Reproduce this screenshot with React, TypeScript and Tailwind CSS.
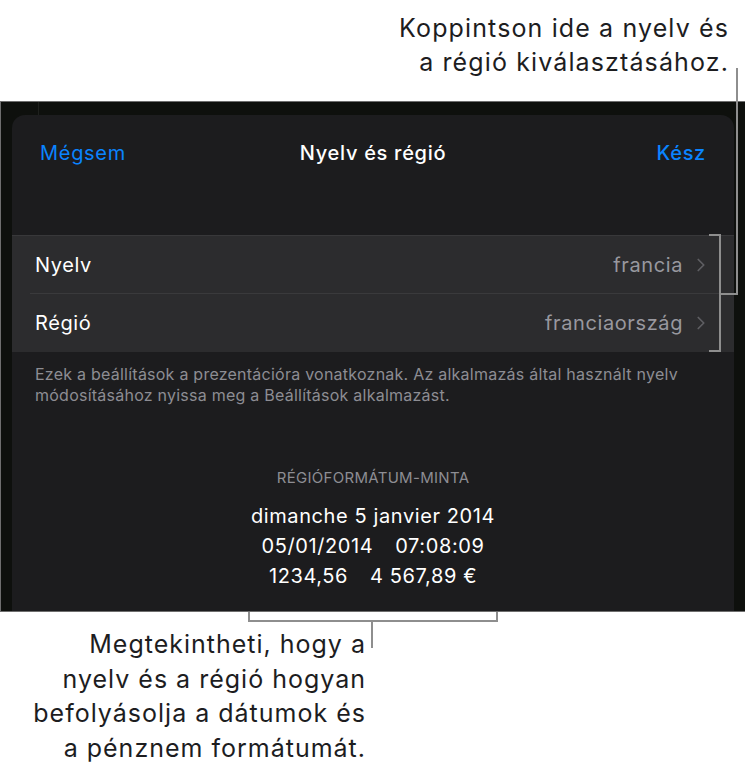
import { ChevronRight } from 'lucide-react';

const Row = ({ label, value, last }: { label: string; value: string; last?: boolean }) => (
  <div className="flex h-[58px] items-stretch bg-[#2c2c2e]">
    <div
      className={`ml-[18px] flex flex-1 items-center justify-between pl-[5px] pr-[22px] ${
        last ? '' : 'border-b border-[#3a3a3c]'
      }`}
    >
      <span className="text-[20px] tracking-[0.03em] text-white">{label}</span>
      <span className="flex items-center gap-[7px] text-[20px] tracking-[0.03em] text-[#98989f]">
        {value}
        <ChevronRight size={22} strokeWidth={1.9} className="text-[#5e5e62]" />
      </span>
    </div>
  </div>
);

export default function App() {
  return (
    <div className="relative h-[771px] w-[745px] overflow-hidden bg-white font-['Inter',sans-serif]">
      {/* top callout */}
      <div className="h-[101px] pr-[16px] pt-[11px] text-right text-[25px] leading-[34px] tracking-[0.045em] text-[#1d1d1f]">
        <p>Koppintson ide a nyelv és</p>
        <p>a régió kiválasztásához.</p>
      </div>

      {/* screenshot */}
      <div className="relative flex h-[511px] flex-col border-y border-l border-[#6e6e6e] bg-[#0e100d] px-[11px] pt-[13px]">
        <div className="absolute left-[37px] top-0 h-[13px] w-px bg-[#1e201d]" />
        <div className="flex flex-1 flex-col rounded-t-[13px] bg-[#1c1c1e]">
          <div className="grid h-[76px] grid-cols-[1fr_auto_1fr] items-center px-[28px] text-[20px] tracking-[0.035em]">
            <span className="text-[#0a84ff]">Mégsem</span>
            <span className="font-medium text-white">Nyelv és régió</span>
            <span className="text-right font-medium text-[#0a84ff]">Kész</span>
          </div>
          <div className="mt-[44px] border-t border-[#38383a]">
            <Row label="Nyelv" value="francia" />
            <Row label="Régió" value="franciaország" last />
          </div>
          <p className="px-[23px] pt-[12px] text-[16px] leading-[21px] tracking-[0.015em] text-[#8d8d93]">
            Ezek a beállítások a prezentációra vonatkoznak. Az alkalmazás által használt nyelv
            módosításához nyissa meg a Beállítások alkalmazást.
          </p>
          <div className="mt-[61px] flex flex-col items-center text-center">
            <span className="text-[15px] tracking-[0.02em] text-[#8d8d93]">RÉGIÓFORMÁTUM-MINTA</span>
            <div className="mt-[11px] text-[20px] leading-[30px] tracking-[0.03em] text-white">
              <p>dimanche 5 janvier 2014</p>
              <p>
                05/01/2014<span className="inline-block w-[22px]" />07:08:09
              </p>
              <p>
                1234,56<span className="inline-block w-[22px]" />4 567,89 €
              </p>
            </div>
          </div>
        </div>
      </div>

      {/* bottom callout */}
      <div className="pr-[379px] pt-[15px] text-right text-[25px] leading-[34.5px] tracking-[0.04em] text-[#1d1d1f]">
        <p>Megtekintheti, hogy a</p>
        <p>nyelv és a régió hogyan</p>
        <p>befolyásolja a dátumok és</p>
        <p>a pénznem formátumát.</p>
      </div>

      {/* callout lines */}
      <div className="absolute left-[736px] top-[68px] h-[226px] w-[2px] bg-[#8e8e8e]" />
      <div className="absolute left-[719px] top-[293px] h-[2px] w-[19px] bg-[#8e8e8e]" />
      <div className="absolute left-[709px] top-[234px] h-[118px] w-[12px] border-y-2 border-r-2 border-[#8e8e8e]" />

      <div className="absolute left-[248px] top-[612px] h-[10px] w-[250px] border-x-2 border-b-2 border-[#8e8e8e]" />
      <div className="absolute left-[371px] top-[620px] h-[28px] w-[2px] bg-[#8e8e8e]" />
    </div>
  );
}
